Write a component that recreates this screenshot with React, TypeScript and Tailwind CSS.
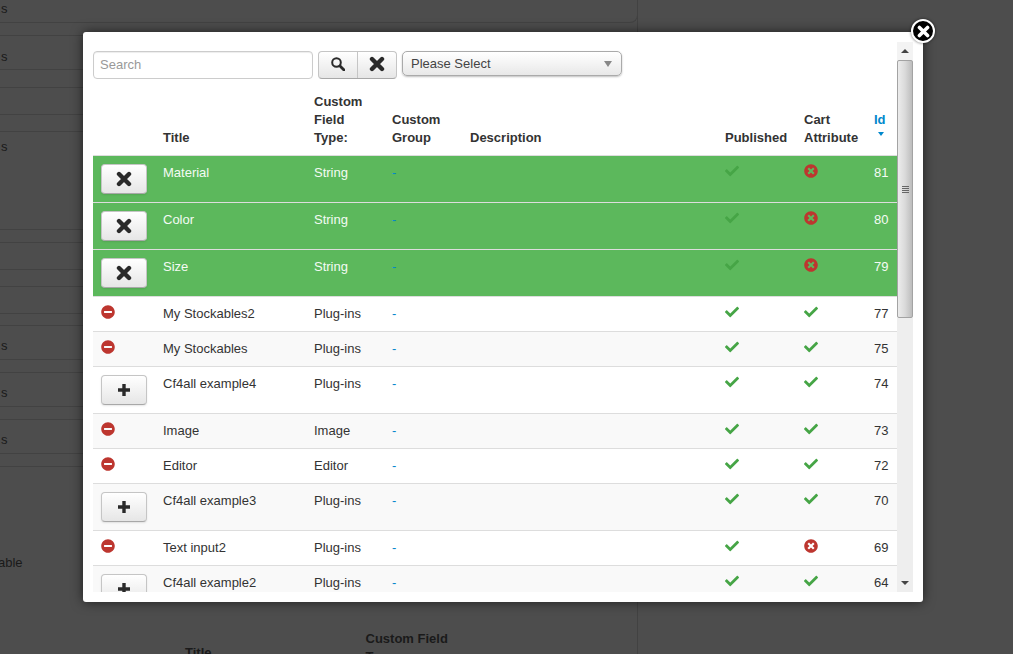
import React from 'react';
import { FaCheck, FaMinusCircle, FaTimesCircle } from 'react-icons/fa';

type Row = {
  action: 'remove' | 'minus' | 'plus';
  title: string;
  type: string;
  published: boolean;
  cart: boolean;
  id: number;
};

const rows: Row[] = [
  { action: 'remove', title: 'Material', type: 'String', published: true, cart: false, id: 81 },
  { action: 'remove', title: 'Color', type: 'String', published: true, cart: false, id: 80 },
  { action: 'remove', title: 'Size', type: 'String', published: true, cart: false, id: 79 },
  { action: 'minus', title: 'My Stockables2', type: 'Plug-ins', published: true, cart: true, id: 77 },
  { action: 'minus', title: 'My Stockables', type: 'Plug-ins', published: true, cart: true, id: 75 },
  { action: 'plus', title: 'Cf4all example4', type: 'Plug-ins', published: true, cart: true, id: 74 },
  { action: 'minus', title: 'Image', type: 'Image', published: true, cart: true, id: 73 },
  { action: 'minus', title: 'Editor', type: 'Editor', published: true, cart: true, id: 72 },
  { action: 'plus', title: 'Cf4all example3', type: 'Plug-ins', published: true, cart: true, id: 70 },
  { action: 'minus', title: 'Text input2', type: 'Plug-ins', published: true, cart: false, id: 69 },
  { action: 'plus', title: 'Cf4all example2', type: 'Plug-ins', published: true, cart: true, id: 64 },
];

// rows of the page behind the overlay: height, top padding and the clipped text on the left
const pageRows: { h: string; pt?: string; text?: string }[] = [
  { h: 'h-[13px]' },
  { h: 'h-[34px]', pt: 'pt-[12px]', text: 's' },
  { h: 'h-[18px]' },
  { h: 'h-[27px]' },
  { h: 'h-[17px]' },
  { h: 'h-[98px]', pt: 'pt-[6px]', text: 's' },
  { h: 'h-[13px]' },
  { h: 'h-[27px]' },
  { h: 'h-[17px]' },
  { h: 'h-[27px]' },
  { h: 'h-[12px]' },
  { h: 'h-[34px]', pt: 'pt-[11px]', text: 's' },
  { h: 'h-[13px]' },
  { h: 'h-[34px]', pt: 'pt-[11px]', text: 's' },
  { h: 'h-[13px]' },
  { h: 'h-[34px]', pt: 'pt-[11px]', text: 's' },
  { h: 'h-[13px]' },
];

function XIcon({ className }: { className: string }) {
  return (
    <svg viewBox="0 0 16 16" className={className} fill="none" stroke="currentColor" strokeWidth="4.4" strokeLinecap="round">
      <path d="M3 3 L13 13 M13 3 L3 13" />
    </svg>
  );
}

function PlusIcon() {
  return (
    <svg viewBox="0 0 12 12" className="h-[12px] w-[12px]" fill="none" stroke="currentColor" strokeWidth="3.4">
      <path d="M6 0 V12 M0 6 H12" />
    </svg>
  );
}

function SearchIcon() {
  return (
    <svg viewBox="0 0 14 14" className="h-[14px] w-[14px]" fill="none" stroke="currentColor">
      <circle cx="5.5" cy="5.5" r="4.3" strokeWidth="2" />
      <path d="M9 9 L13 13" strokeWidth="2.8" strokeLinecap="round" />
    </svg>
  );
}

function ActionButton({ icon }: { icon: React.ReactNode }) {
  return (
    <button className="flex h-[30px] w-[46px] items-center justify-center rounded-[4px] border border-[#c5c5c5] border-b-[#a8a8a8] bg-gradient-to-b from-white to-[#e6e6e6] text-[#2a2a2a] shadow-[0_1px_2px_rgba(0,0,0,0.1)]">
      {icon}
    </button>
  );
}

function Scrollbar() {
  return (
    <div className="flex h-full w-[16px] shrink-0 flex-col bg-[#eeeeee]">
      <div className="flex h-[18px] items-center justify-center bg-[#f3f3f3]">
        <div className="h-0 w-0 border-x-[4px] border-b-[4px] border-x-transparent border-b-[#444]" />
      </div>
      <div className="flex h-[258px] flex-col items-center justify-center rounded-[2px] border border-[#a3a3a3] bg-gradient-to-r from-[#ececec] via-[#dadada] to-[#bdbdbd]">
        <div className="flex w-[7px] flex-col gap-px">
          <div className="h-px bg-[#666]" />
          <div className="h-px bg-[#666]" />
          <div className="h-px bg-[#666]" />
          <div className="h-px bg-[#666]" />
        </div>
      </div>
      <div className="flex-1" />
      <div className="mb-px flex h-[18px] items-center justify-center pt-[2px]">
        <div className="h-0 w-0 border-x-[4px] border-t-[4px] border-x-transparent border-t-[#444]" />
      </div>
    </div>
  );
}

function FieldTable() {
  return (
    <table className="w-[804px] table-fixed border-collapse text-[13px] leading-[18px] text-[#333]">
      <colgroup>
        <col className="w-[62px]" />
        <col className="w-[151px]" />
        <col className="w-[78px]" />
        <col className="w-[78px]" />
        <col className="w-[255px]" />
        <col className="w-[79px]" />
        <col className="w-[70px]" />
        <col className="w-[31px]" />
      </colgroup>
      <thead>
        <tr className="align-bottom">
          <th className="p-2" />
          <th className="p-2 text-left font-bold">Title</th>
          <th className="p-2 text-left font-bold">Custom Field Type:</th>
          <th className="p-2 text-left font-bold">Custom Group</th>
          <th className="p-2 text-left font-bold">Description</th>
          <th className="p-2 text-left font-bold">Published</th>
          <th className="p-2 text-left font-bold">Cart Attribute</th>
          <th className="p-2 text-left font-bold text-[#0088cc]">
            Id
            <div className="ml-[4px] mt-[3px] mb-[11px] h-0 w-0 border-x-[3.5px] border-t-[4px] border-x-transparent border-t-[#0088cc]" />
          </th>
        </tr>
      </thead>
      <tbody>
        {rows.map((row, i) => {
          const picked = row.action === 'remove';
          const rowColor = picked ? 'bg-[#5cb85c] text-[#f4fbf4]' : i % 2 === 1 ? 'bg-white' : 'bg-[#f9f9f9]';
          return (
            <tr key={row.id} className={`${rowColor} align-top`}>
              <td className="border-t border-[#dddddd] p-2">
                {row.action === 'remove' && <ActionButton icon={<XIcon className="h-[16px] w-[16px]" />} />}
                {row.action === 'plus' && <ActionButton icon={<PlusIcon />} />}
                {row.action === 'minus' && <FaMinusCircle className="h-[14px] w-[14px] text-[#bd362f]" />}
              </td>
              <td className="border-t border-[#dddddd] p-2">{row.title}</td>
              <td className="border-t border-[#dddddd] p-2">{row.type}</td>
              <td className="border-t border-[#dddddd] p-2 text-[#0088cc]">-</td>
              <td className="border-t border-[#dddddd] p-2" />
              <td className="border-t border-[#dddddd] p-2">
                <FaCheck className="h-[14px] w-[14px] text-[#46a546]" />
              </td>
              <td className="border-t border-[#dddddd] p-2">
                {row.cart ? (
                  <FaCheck className="h-[14px] w-[14px] text-[#46a546]" />
                ) : (
                  <FaTimesCircle className="h-[14px] w-[14px] text-[#bd362f]" />
                )}
              </td>
              <td className="border-t border-[#dddddd] p-2">{row.id}</td>
            </tr>
          );
        })}
      </tbody>
    </table>
  );
}

function Modal() {
  return (
    <div className="absolute left-[83px] top-[32px] h-[570px] w-[840px] rounded-[3px] bg-white p-[10px] shadow-[0_0_12px_rgba(0,0,0,0.6)]">
      <div className="flex h-[550px]">
        <div className="w-[804px] shrink-0 overflow-hidden">
          <div className="mt-[9px] mb-[6px] flex items-start">
            <input
              placeholder="Search"
              className="h-[28px] w-[220px] rounded-[4px] border border-[#cccccc] px-[6px] pb-[2px] text-[13px] shadow-[inset_0_1px_1px_rgba(0,0,0,0.075)] outline-none placeholder:text-[#999]"
            />
            <div className="ml-[5px] flex h-[28px] w-[79px] rounded-[4px] border border-[#c5c5c5] border-b-[#a8a8a8] bg-gradient-to-b from-white to-[#e6e6e6] text-[#2a2a2a]">
              <button className="flex w-[39px] items-center justify-center border-r border-[#c5c5c5] pb-[2px]">
                <SearchIcon />
              </button>
              <button className="flex flex-1 items-center justify-center pb-[3px]">
                <XIcon className="h-[16px] w-[16px]" />
              </button>
            </div>
            <div className="ml-[5px] flex h-[25px] w-[220px] items-center justify-between rounded-[5px] border border-[#aaaaaa] bg-gradient-to-b from-white via-[#f4f4f4] to-[#e8e8e8] pl-[8px] pr-[9px] text-[13px] text-[#444] shadow-[0_1px_2px_rgba(0,0,0,0.25)]">
              <span>Please Select</span>
              <div className="h-0 w-0 border-x-[4px] border-t-[6px] border-x-transparent border-t-[#888]" />
            </div>
          </div>
          <FieldTable />
        </div>
        <Scrollbar />
      </div>
    </div>
  );
}

export default function App() {
  return (
    <div className="relative h-[654px] w-[1013px] overflow-hidden bg-[#4d4d4d] font-['Liberation_Sans',Arial,sans-serif] text-[13px] leading-[18px] text-[#1a1a1a]">
      <div className="h-[654px] w-[638px] border-r border-[#424242]">
        <div className="-mr-px h-[23px] rounded-br-[8px] border-b border-r border-[#424242]">
          <div className="pl-[1px]">s</div>
        </div>
        {pageRows.map((row, i) => (
          <div key={i} className={`${row.h} ${row.pt ?? ''} border-b border-[#424242] pl-[1px]`}>
            {row.text}
          </div>
        ))}
        <div className="mt-[87px] -ml-[2px]">able</div>
        <div className="mt-[58px] flex font-bold">
          <span className="ml-[185px] mt-[14px]">Title</span>
          <span className="ml-[154px]">
            Custom Field
            <br />
            Type:
          </span>
        </div>
      </div>
      <Modal />
      <button className="absolute left-[911px] top-[19px] flex h-[24px] w-[24px] items-center justify-center rounded-full border-[2px] border-white bg-black text-white shadow-[0_0_3px_rgba(0,0,0,0.6)]">
        <XIcon className="h-[13px] w-[13px]" />
      </button>
    </div>
  );
}
